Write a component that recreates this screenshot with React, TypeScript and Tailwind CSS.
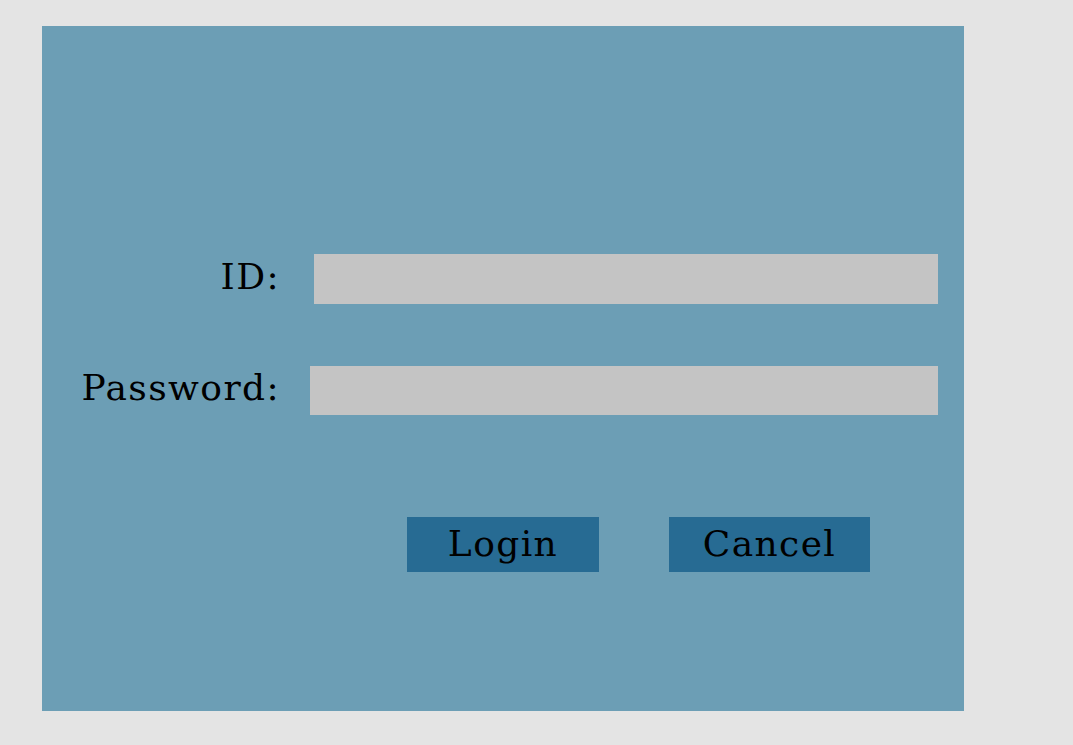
export default function App() {
  return (
    <div className="min-h-screen w-full bg-[#e4e4e4] pt-[26px] pl-[42px] font-['DejaVu_Serif',serif] text-black">
      <div className="flex h-[685px] w-[922px] flex-col bg-[#6c9eb5] pr-[26px] pt-[228px]">
        <div className="flex h-[50px] items-center">
          <label className="w-[238px] pb-[5px] text-right text-[36px] leading-none tracking-[1.4px]">
            ID:
          </label>
          <input
            type="text"
            className="ml-[34px] h-[50px] flex-1 bg-[#c4c4c4] outline-none"
          />
        </div>
        <div className="mt-[62px] flex h-[49px] items-center">
          <label className="w-[238px] pb-[5px] text-right text-[36px] leading-none tracking-[1.4px]">
            Password:
          </label>
          <input
            type="password"
            className="ml-[30px] h-[49px] flex-1 bg-[#c4c4c4] outline-none"
          />
        </div>
        <div className="mt-[102px] flex gap-[70px] pl-[365px]">
          <button className="flex h-[55px] w-[192px] items-center justify-center bg-[#276b93] pb-[2px] text-[36px] leading-none tracking-[1.4px]">
            Login
          </button>
          <button className="flex h-[55px] w-[201px] items-center justify-center bg-[#276b93] pb-[2px] text-[36px] leading-none tracking-[1.4px]">
            Cancel
          </button>
        </div>
      </div>
    </div>
  );
}
